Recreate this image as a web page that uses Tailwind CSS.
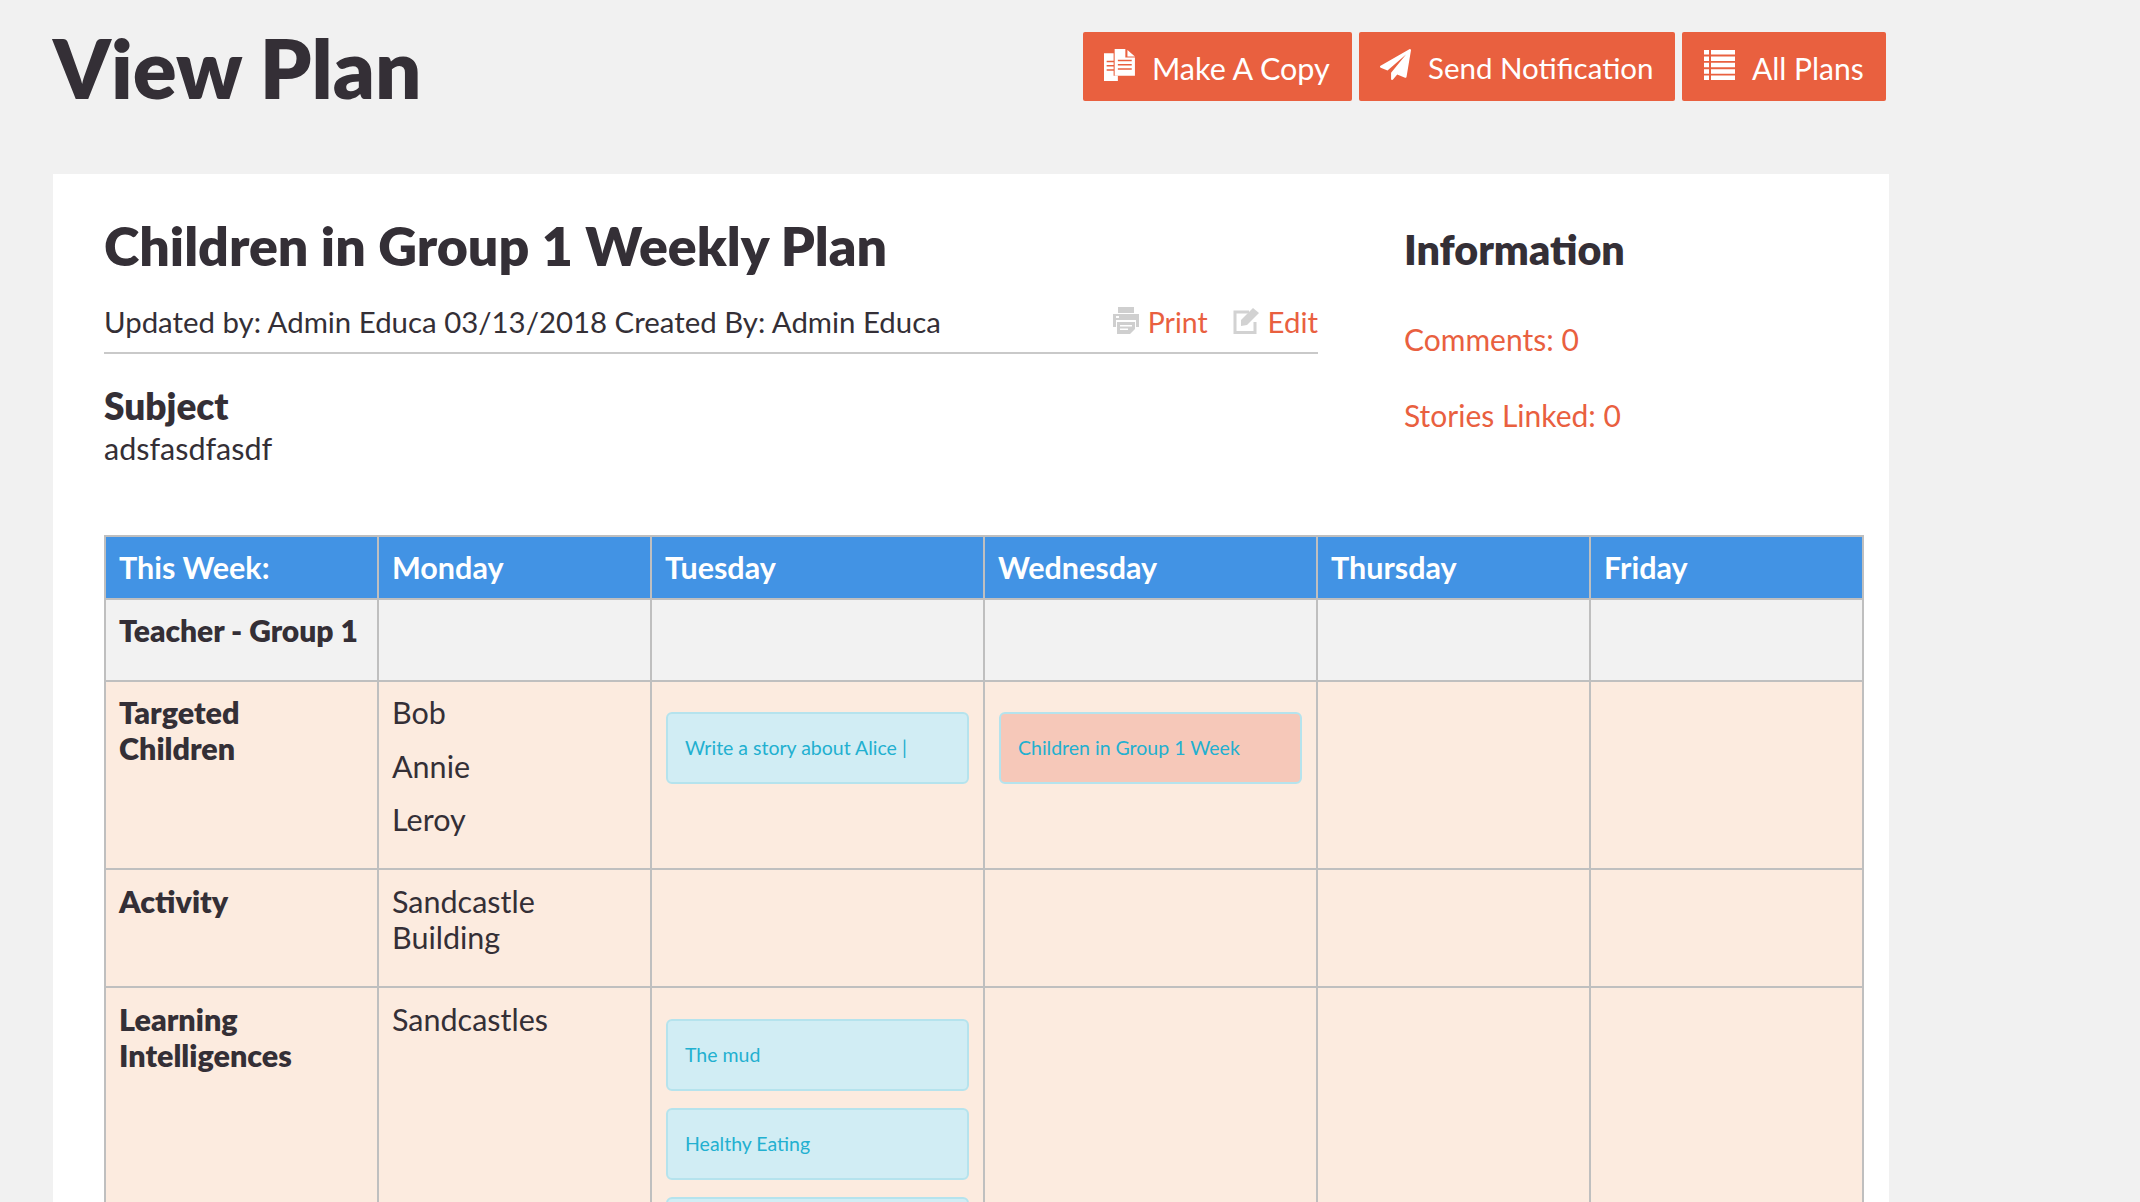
<!DOCTYPE html>
<html><head><meta charset="utf-8"><title>View Plan</title>
<script src="https://cdn.jsdelivr.net/npm/@tailwindcss/browser@4"></script></head>
<body class="bg-[#f1f1f1] overflow-hidden h-[1202px] font-['Lato','Noto_Sans',sans-serif] text-[#342f36]">
<div class="w-[1889px] pl-[53px]">
  <header class="flex justify-between items-start h-[174px]">
    <h1 class="text-[81.5px] leading-none font-extrabold pt-[27px]">View Plan</h1>
    <div class="flex gap-[7px] pt-[32px] pr-[3px] text-white text-[30px]">
      <a class="h-[69px] w-[269px] bg-[#e9603f] rounded-[2px] flex items-center pl-[21px] gap-[16px]">
        <svg class="w-[32px] h-[32px] mb-[4px]" viewBox="0 0 30 30" fill="#fff"><path fill-rule="evenodd" d="M0 4h9v21h4v5H0zM2.500 11v1.500H9V11zM2.500 15v1.500H9V15zM2.500 19v1.500H9V19z"/><path fill-rule="evenodd" d="M10 0h10v8h9v17H10zM13 10v1.500h13V10zM13 14v1.500h13V14zM13 18v1.500h13V18z"/><path d="M22 1l7 6h-7z"/></svg>
        <span class="pt-[4px] text-[30.5px]">Make A Copy</span></a>
      <a class="h-[69px] w-[316px] bg-[#e9603f] rounded-[2px] flex items-center pl-[21px] gap-[17px]">
        <svg class="w-[31px] h-[31px] mb-[4px]" viewBox="0 0 1792 1792" fill="#fff"><path d="M1764 11q33 24 27 64l-256 1536q-5 29-32 45-14 8-31 8-11 0-24-5l-453-185-242 295q-18 23-49 23-13 0-22-4-19-7-30.500-23.500t-11.500-36.500v-349l864-1059-1069 925-395-162q-37-14-40-55-2-40 32-59l1664-960q15-9 32-9 20 0 36 11z"/></svg>
        <span class="pt-[4px] text-[29.5px]">Send Notification</span></a>
      <a class="h-[69px] w-[204px] bg-[#e9603f] rounded-[2px] flex items-center pl-[22px] gap-[17px]">
        <svg class="w-[31px] h-[30px] mb-[3px]" viewBox="0 0 31 30" fill="#fff"><path d="M0 0h5v4.500H0zM7 0h24v4.500H7zM0 6.400h5v4.500H0zM7 6.400h24v4.500H7zM0 12.800h5v4.500H0zM7 12.800h24v4.500H7zM0 19.200h5v4.500H0zM7 19.200h24v4.500H7zM0 25.500h5v4.500H0zM7 25.500h24v4.500H7z"/></svg>
        <span class="pt-[4px]">All Plans</span></a>
    </div>
  </header>
  <main class="bg-white h-[1028px] overflow-hidden pl-[51px] pr-[26px] pt-[41px]">
    <div class="flex h-[320px]">
      <div class="w-[1214px]">
        <h2 class="text-[53.7px] leading-[60px] font-extrabold">Children in Group 1 Weekly Plan</h2>
        <div class="flex justify-between items-end h-[58px] pb-[12px] mt-[21px] border-b-2 border-[#c9c9c9] text-[29.4px] leading-[36px]">
          <span>Updated by: Admin Educa 03/13/2018 Created By: Admin Educa</span>
          <span class="flex items-center text-[#e9603f]">
            <svg class="w-[26px] h-[27px] mr-[9px] mb-[3px]" viewBox="0 0 26 27" fill="#cfcfcf"><path d="M5 0h16v6H5z"/><path fill-rule="evenodd" d="M0 7h26v13h-3v-7H3v7H0zM3 9v2h3V9z"/><path fill-rule="evenodd" d="M4 15h18v7l-5 5H4zM7 18v1.500h12V18zM7 21.500V23h8v-1.500z"/></svg>
            <span class="text-[28.4px]">Print</span>
            <svg class="w-[27px] h-[27px] ml-[25px] mr-[8px] mb-[3px]" viewBox="0 0 27 27"><path d="M16 5H2v20.500h20V15" fill="none" stroke="#d2d2d2" stroke-width="3"/><path d="M8 13L20 1l6 5-12 12-6 1z" fill="#d2d2d2"/></svg>
            <span>Edit</span>
          </span>
        </div>
        <h3 class="text-[37px] leading-[40px] font-extrabold mt-[32px]">Subject</h3>
        <p class="text-[30.5px] leading-[36px] mt-[4px]">adsfasdfasdf</p>
      </div>
      <aside class="ml-[86px] text-[30px] text-[#e9603f]">
        <h3 class="text-[41.2px] leading-[48px] font-extrabold text-[#342f36] mt-[10px]">Information</h3>
        <p class="leading-[36px] mt-[48px]">Comments: 0</p>
        <p class="leading-[36px] mt-[40px]">Stories Linked: 0</p>
      </aside>
    </div>
    <table class="table-fixed border-collapse w-[1759px] text-[30.5px] leading-[35.5px] border-2 border-[#bfbfbf]">
      <colgroup><col class="w-[273px]"><col class="w-[273px]"><col class="w-[333px]"><col class="w-[333px]"><col class="w-[273px]"><col class="w-[273px]"></colgroup>
      <thead class="bg-[#4293e4] text-white font-extrabold text-left">
        <tr class="h-[63px]">
          <th class="border-2 border-[#bfbfbf] pl-[13px]">This Week:</th>
          <th class="border-2 border-[#bfbfbf] pl-[13px]">Monday</th>
          <th class="border-2 border-[#bfbfbf] pl-[13px]">Tuesday</th>
          <th class="border-2 border-[#bfbfbf] pl-[13px]">Wednesday</th>
          <th class="border-2 border-[#bfbfbf] pl-[13px]">Thursday</th>
          <th class="border-2 border-[#bfbfbf] pl-[13px]">Friday</th>
        </tr>
      </thead>
      <tbody>
        <tr class="h-[82px] bg-[#f2f2f2] align-top">
          <td class="border-2 border-[#bfbfbf] pl-[13px] pt-[13px] font-extrabold whitespace-nowrap text-[30px]">Teacher - Group 1</td>
          <td class="border-2 border-[#bfbfbf]"></td><td class="border-2 border-[#bfbfbf]"></td><td class="border-2 border-[#bfbfbf]"></td><td class="border-2 border-[#bfbfbf]"></td><td class="border-2 border-[#bfbfbf]"></td>
        </tr>
        <tr class="h-[188px] bg-[#fcebdf] align-top">
          <td class="border-2 border-[#bfbfbf] pl-[13px] pt-[13px] font-extrabold">Targeted<br>Children</td>
          <td class="border-2 border-[#bfbfbf] pl-[13px] pt-[13px]"><div class="flex flex-col gap-[18px]"><span>Bob</span><span>Annie</span><span>Leroy</span></div></td>
          <td class="border-2 border-[#bfbfbf] px-[14px] pt-[30px]"><div class="h-[72px] rounded-[6px] border-2 border-[#b5e3ed] bg-[#d1edf4] pl-[17px] flex items-center text-[19.5px] text-[#22b0d0] overflow-hidden whitespace-nowrap">Write a story about Alice |</div></td>
          <td class="border-2 border-[#bfbfbf] px-[14px] pt-[30px]"><div class="h-[72px] rounded-[6px] border-2 border-[#b5e3ed] bg-[#f6c8b9] pl-[17px] flex items-center text-[19.5px] text-[#22b0d0] overflow-hidden whitespace-nowrap">Children in Group 1 Week</div></td>
          <td class="border-2 border-[#bfbfbf]"></td><td class="border-2 border-[#bfbfbf]"></td>
        </tr>
        <tr class="h-[118px] bg-[#fcebdf] align-top">
          <td class="border-2 border-[#bfbfbf] pl-[13px] pt-[14px] font-extrabold">Activity</td>
          <td class="border-2 border-[#bfbfbf] pl-[13px] pt-[14px]">Sandcastle<br>Building</td>
          <td class="border-2 border-[#bfbfbf]"></td><td class="border-2 border-[#bfbfbf]"></td><td class="border-2 border-[#bfbfbf]"></td><td class="border-2 border-[#bfbfbf]"></td>
        </tr>
        <tr class="bg-[#fcebdf] align-top">
          <td class="border-2 border-[#bfbfbf] pl-[13px] pt-[14px] font-extrabold">Learning<br>Intelligences</td>
          <td class="border-2 border-[#bfbfbf] pl-[13px] pt-[14px]">Sandcastles</td>
          <td class="border-2 border-[#bfbfbf] px-[14px] pt-[31px]">
            <div class="flex flex-col gap-[17px]">
              <div class="h-[72px] rounded-[6px] border-2 border-[#b5e3ed] bg-[#d1edf4] pl-[17px] flex items-center text-[19.5px] text-[#22b0d0]">The mud</div>
              <div class="h-[72px] rounded-[6px] border-2 border-[#b5e3ed] bg-[#d1edf4] pl-[17px] flex items-center text-[19.5px] text-[#22b0d0]">Healthy Eating</div>
              <div class="h-[72px] rounded-[6px] border-2 border-[#b5e3ed] bg-[#d1edf4]"></div>
            </div>
          </td>
          <td class="border-2 border-[#bfbfbf]"></td><td class="border-2 border-[#bfbfbf]"></td><td class="border-2 border-[#bfbfbf]"></td>
        </tr>
      </tbody>
    </table>
  </main>
</div>
</body></html>
